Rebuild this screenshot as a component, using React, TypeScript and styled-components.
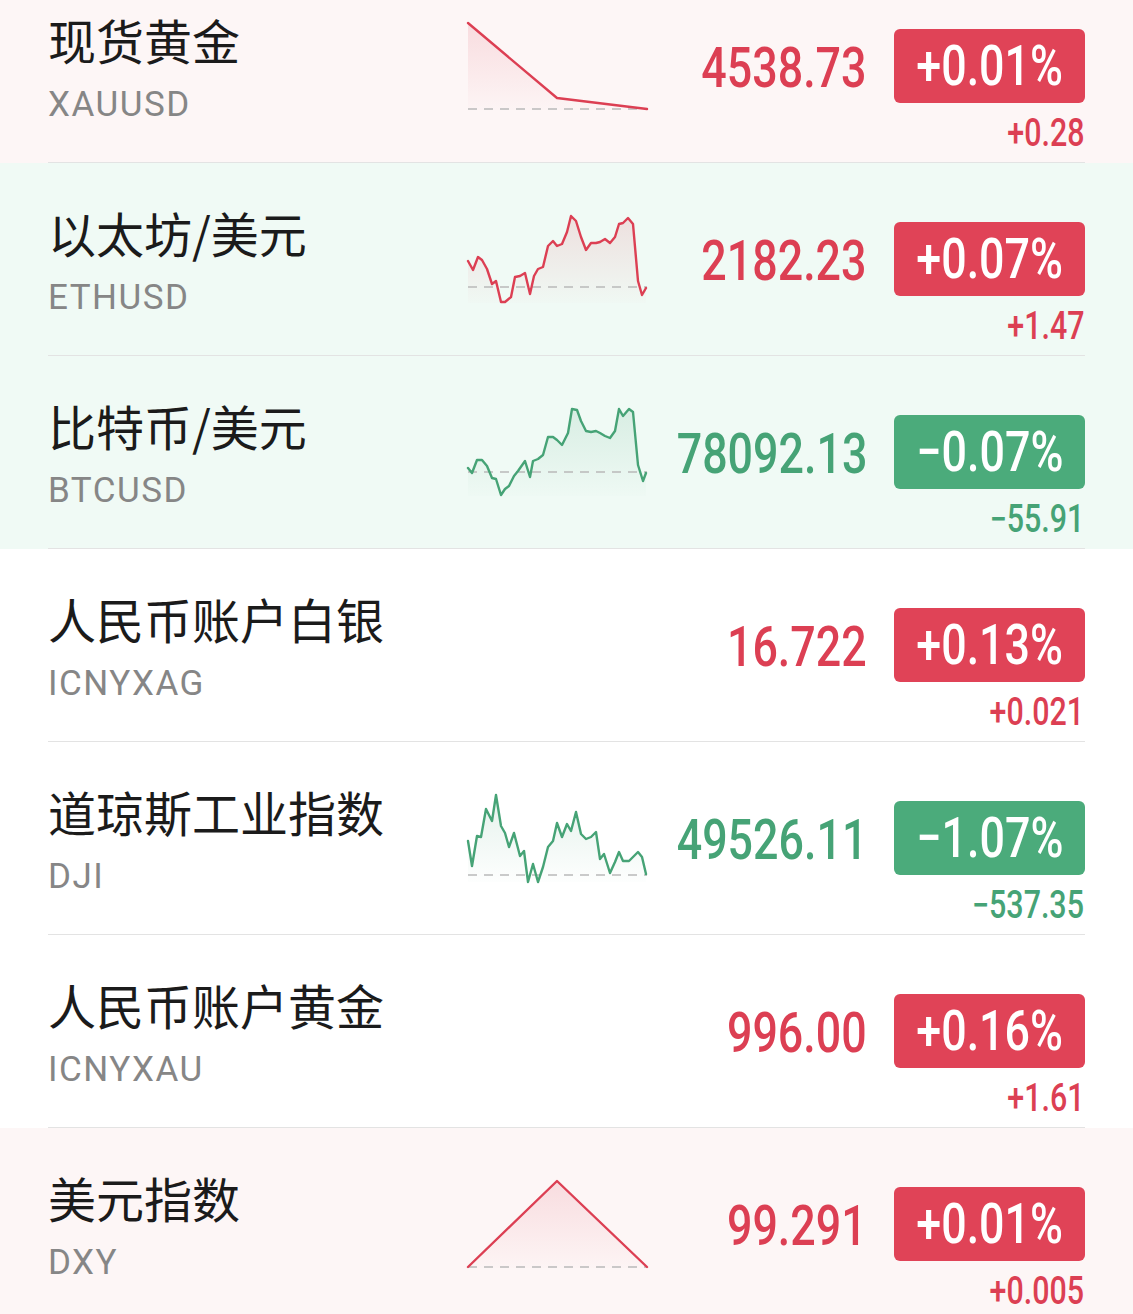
import React from 'react';
import styled, { createGlobalStyle, css } from 'styled-components';

type Tone = 'up' | 'down';
type Flash = 'red' | 'green' | undefined;

type Quote = {
  name: string;
  code: string;
  price: string;
  pct: string;
  change: string;
  tone: Tone;
  flash?: Flash;
  chart?: { points: number[][]; base: number };
};

const RED = '#dc3f53';
const RED_BADGE = '#e04357';
const GREEN = '#46a376';
const GREEN_BADGE = '#4bab7b';

const GlobalStyle = createGlobalStyle`
  body {
    margin: 0;
    background: #ffffff;
    font-family: Roboto, "Noto Sans CJK SC", sans-serif;
  }
`;

const List = styled.div`
  width: 1133px;
  margin-top: -30px;
  overflow: hidden;
`;

const Row = styled.div<{ $flash: Flash }>`
  background: ${(p) =>
    p.$flash === 'red' ? '#fdf6f6' : p.$flash === 'green' ? '#f0faf5' : '#ffffff'};
`;

const Inner = styled.div`
  margin: 0 48px;
  height: 192px;
  border-bottom: 1px solid #e3e3e3;
  display: grid;
  grid-template-columns: 420px 179px minmax(0, 1fr);
  align-items: start;
`;

const NameCol = styled.div`
  display: flex;
  flex-direction: column;
  padding-top: 45px;
`;

const Title = styled.div`
  font-family: "Noto Sans CJK SC", sans-serif;
  font-size: 48px;
  line-height: 48px;
  color: #1b1b1b;
  white-space: nowrap;
`;

const Code = styled.div`
  margin-top: 24px;
  font-family: Roboto, sans-serif;
  font-size: 35px;
  line-height: 35px;
  letter-spacing: 1.5px;
  color: #868686;
`;

const ChartBox = styled.div`
  margin-top: 52px;
  width: 179px;
  height: 88px;
`;

const QuoteCol = styled.div`
  padding-top: 59px;
  display: flex;
  flex-direction: column;
  align-items: flex-end;
  min-width: 0;
`;

const TopLine = styled.div`
  width: 100%;
  display: flex;
  align-items: center;
  gap: 27px;
`;

const PriceCell = styled.div`
  flex: 1;
  min-width: 0;
  padding-top: 3px;
  display: flex;
  justify-content: flex-end;
`;

const numeric = css`
  display: inline-block;
  flex-shrink: 0;
  font-family: Roboto, sans-serif;
  font-weight: 500;
  line-height: 1;
  white-space: nowrap;
  transform: scaleX(0.8);
`;

const Price = styled.span<{ $tone: Tone }>`
  ${numeric};
  font-size: 56px;
  color: ${(p) => (p.$tone === 'up' ? RED : GREEN)};
  transform-origin: right center;
`;

const Badge = styled.div<{ $tone: Tone }>`
  flex-shrink: 0;
  width: 191px;
  height: 74px;
  border-radius: 6px;
  background: ${(p) => (p.$tone === 'up' ? RED_BADGE : GREEN_BADGE)};
  display: flex;
  align-items: center;
  justify-content: center;
`;

const BadgeText = styled.span`
  ${numeric};
  font-size: 56px;
  color: #ffffff;
  transform-origin: center center;
`;

const Change = styled.span<{ $tone: Tone }>`
  ${numeric};
  margin-top: 11px;
  margin-right: 1px;
  font-size: 38px;
  color: ${(p) => (p.$tone === 'up' ? RED : GREEN)};
  transform-origin: right center;
`;

const quotes: Quote[] = [
  {
    name: '现货黄金', code: 'XAUUSD', price: '4538.73', pct: '+0.01%', change: '+0.28', tone: 'up', flash: 'red',
    chart: { points: [[0, 1], [89, 76], [179, 87]], base: 87 },
  },
  {
    name: '以太坊/美元', code: 'ETHUSD', price: '2182.23', pct: '+0.07%', change: '+1.47', tone: 'up', flash: 'green',
    chart: {
      base: 72,
      points: [
        [0, 46], [5, 55], [10, 42], [14, 45], [19, 54], [24, 69], [28, 66], [33, 87], [37, 87], [43, 82],
        [47, 62], [52, 61], [57, 58], [62, 79], [66, 61], [70, 54], [75, 52], [80, 31], [85, 26], [89, 31],
        [94, 29], [99, 17], [103, 1], [108, 6], [113, 22], [118, 35], [123, 28], [128, 28], [132, 27], [137, 24],
        [142, 28], [147, 22], [151, 9], [155, 8], [160, 3], [165, 9], [170, 66], [174, 80], [178, 73],
      ],
    },
  },
  {
    name: '比特币/美元', code: 'BTCUSD', price: '78092.13', pct: '−0.07%', change: '−55.91', tone: 'down', flash: 'green',
    chart: {
      base: 64,
      points: [
        [0, 60], [4, 65], [9, 52], [14, 52], [19, 58], [24, 70], [28, 71], [33, 87], [37, 81], [41, 78],
        [46, 68], [50, 63], [57, 53], [62, 69], [65, 53], [70, 51], [75, 47], [80, 29], [85, 29], [89, 32],
        [94, 37], [100, 25], [104, 1], [109, 2], [113, 13], [118, 23], [123, 24], [128, 23], [132, 25], [137, 28],
        [142, 30], [147, 23], [151, 1], [155, 8], [161, 1], [165, 4], [170, 57], [175, 73], [178, 65],
      ],
    },
  },
  { name: '人民币账户白银', code: 'ICNYXAG', price: '16.722', pct: '+0.13%', change: '+0.021', tone: 'up' },
  {
    name: '道琼斯工业指数', code: 'DJI', price: '49526.11', pct: '−1.07%', change: '−537.35', tone: 'down',
    chart: {
      base: 81,
      points: [
        [0, 47], [4, 72], [9, 42], [13, 43], [18, 15], [24, 27], [28, 1], [33, 32], [37, 39], [41, 53],
        [46, 39], [52, 62], [56, 57], [60, 88], [65, 70], [70, 88], [75, 73], [80, 53], [85, 47], [89, 29],
        [94, 43], [99, 30], [103, 37], [108, 18], [113, 40], [118, 45], [123, 43], [128, 38], [132, 65], [136, 60],
        [142, 79], [147, 68], [151, 58], [155, 67], [161, 67], [170, 58], [174, 63], [178, 80],
      ],
    },
  },
  { name: '人民币账户黄金', code: 'ICNYXAU', price: '996.00', pct: '+0.16%', change: '+1.61', tone: 'up' },
  {
    name: '美元指数', code: 'DXY', price: '99.291', pct: '+0.01%', change: '+0.005', tone: 'up', flash: 'red',
    chart: { points: [[0, 87], [89, 1], [179, 87]], base: 87 },
  },
];

function Sparkline({ id, points, base, tone }: { id: string; points: number[][]; base: number; tone: Tone }) {
  const color = tone === 'up' ? RED : GREEN;
  const line = points.map(([x, y], i) => `${i ? 'L' : 'M'}${x} ${y}`).join(' ');
  const last = points[points.length - 1];
  const area = `${line} L${last[0]} 88 L${points[0][0]} 88 Z`;
  return (
    <svg width="179" height="88" viewBox="0 0 179 88" overflow="visible">
      <defs>
        <linearGradient id={id} x1="0" y1="0" x2="0" y2="1">
          <stop offset="0" stopColor={color} stopOpacity="0.14" />
          <stop offset="1" stopColor={color} stopOpacity="0.01" />
        </linearGradient>
      </defs>
      <path d={area} fill={`url(#${id})`} />
      <line x1="0" y1={base} x2="179" y2={base} stroke="#b9b9b9" strokeWidth="1.5" strokeDasharray="9 7" />
      <path d={line} fill="none" stroke={color} strokeWidth="2.4" strokeLinejoin="round" strokeLinecap="round" />
    </svg>
  );
}

export default function App() {
  return (
    <>
      <GlobalStyle />
      <List>
        {quotes.map((q) => (
          <Row key={q.code} $flash={q.flash}>
            <Inner>
              <NameCol>
                <Title>{q.name}</Title>
                <Code>{q.code}</Code>
              </NameCol>
              <ChartBox>
                {q.chart && <Sparkline id={`g-${q.code}`} points={q.chart.points} base={q.chart.base} tone={q.tone} />}
              </ChartBox>
              <QuoteCol>
                <TopLine>
                  <PriceCell>
                    <Price $tone={q.tone}>{q.price}</Price>
                  </PriceCell>
                  <Badge $tone={q.tone}>
                    <BadgeText>{q.pct}</BadgeText>
                  </Badge>
                </TopLine>
                <Change $tone={q.tone}>{q.change}</Change>
              </QuoteCol>
            </Inner>
          </Row>
        ))}
      </List>
    </>
  );
}
